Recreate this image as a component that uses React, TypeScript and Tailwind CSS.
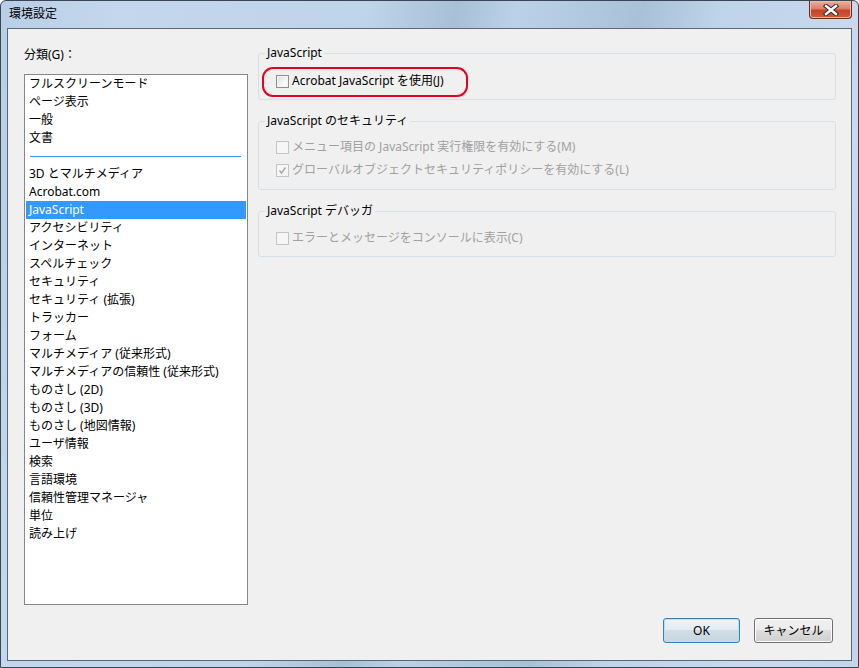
import React from "react"

/*
====================================
DATA
====================================
*/

const topItems = [
 "フルスクリーンモード",
 "ページ表示",
 "一般",
 "文書",
]

const bottomItems = [
 "3D とマルチメディア",
 "Acrobat.com",
 "JavaScript",
 "アクセシビリティ",
 "インターネット",
 "スペルチェック",
 "セキュリティ",
 "セキュリティ (拡張)",
 "トラッカー",
 "フォーム",
 "マルチメディア (従来形式)",
 "マルチメディアの信頼性 (従来形式)",
 "ものさし (2D)",
 "ものさし (3D)",
 "ものさし (地図情報)",
 "ユーザ情報",
 "検索",
 "言語環境",
 "信頼性管理マネージャ",
 "単位",
 "読み上げ",
]

const selected = "JavaScript"

/*
====================================
CHECKBOX
====================================
*/

function CheckBox({
 checked,
 disabled,
}: {
 checked?: boolean
 disabled?: boolean
}) {

 return (

  <span
   className={`
    w-[13px]
    h-[13px]
    shrink-0
    border
    flex
    items-center
    justify-center
    ${
     disabled
      ? "border-[#c4c4c4] bg-[#f6f6f6]"
      : "border-[#8e8f8f] bg-[linear-gradient(135deg,#dcdcdc,#f6f6f6_60%,#ffffff)] shadow-[inset_0_0_0_1px_#f4f4f4]"
    }
   `}
  >

   {
    checked && (

     <svg
      width="9"
      height="9"
      viewBox="0 0 9 9"
     >

      <path
       d="M1.5 4.5 L3.5 7 L7.5 1.5"
       fill="none"
       stroke={disabled ? "#a8a8a8" : "#333"}
       strokeWidth="1.4"
      />

     </svg>

    )
   }

  </span>

 )
}

/*
====================================
OPTION ROW
====================================
*/

function Option({
 label,
 checked,
 disabled,
 className,
}: {
 label: string
 checked?: boolean
 disabled?: boolean
 className?: string
}) {

 return (

  <div
   className={`
    flex
    items-center
    gap-[3px]
    h-[18px]
    pl-[17px]
    whitespace-nowrap
    ${disabled ? "text-[#a0a0a0]" : "text-black"}
    ${className || ""}
   `}
  >

   <CheckBox
    checked={checked}
    disabled={disabled}
   />

   <span>{label}</span>

  </div>

 )
}

/*
====================================
GROUP BOX
====================================
*/

function Group({
 title,
 className,
 children,
}: {
 title: string
 className?: string
 children: React.ReactNode
}) {

 return (

  <fieldset
   className={`
    relative
    border
    border-[#d5dfe5]
    rounded-[3px]
    ${className || ""}
   `}
  >

   <legend
    className="
     ml-[6px]
     px-[2px]
     leading-[16px]
     text-black
    "
   >

    {title}

   </legend>

   {children}

  </fieldset>

 )
}

/*
====================================
BUTTON
====================================
*/

function DialogButton({
 label,
 focused,
 width,
}: {
 label: string
 focused?: boolean
 width: string
}) {

 return (

  <button
   className={`
    ${width}
    h-[25px]
    rounded-[3px]
    border
    text-black
    leading-none
    ${
     focused
      ? "border-[#3c7fb1] shadow-[inset_0_0_0_1px_#aee3f9] bg-[linear-gradient(#edf3f7_0%,#e3ebf1_50%,#d2dee6_50%,#c6d5df_100%)]"
      : "border-[#707070] shadow-[inset_0_0_0_1px_#fcfcfc] bg-[linear-gradient(#f2f2f2_0%,#ebebeb_50%,#dddddd_50%,#cfcfcf_100%)]"
    }
   `}
  >

   {label}

  </button>

 )
}

export default function App() {

 return (

  <div
   className="
    w-[859px]
    h-[668px]
    flex
    flex-col
    border
    border-[#3b4653]
    rounded-t-[6px]
    overflow-hidden
    text-[12px]
    bg-[linear-gradient(100deg,#b8cee7_0%,#c4d7ec_12%,#bfd3ea_38%,#a9bfd8_47%,#bcd1e9_53%,#aac0d9_66%,#bfd3ea_74%,#c9daee_90%,#c2d5eb_100%)]
   "
   style={{
    fontFamily:
     '"Noto Sans", "Noto Sans CJK JP", sans-serif',
   }}
  >

   {/* TITLE BAR */}

   <div
    className="
     h-[27px]
     flex
     items-start
     justify-between
     shrink-0
    "
   >

    <span
     className="
      ml-[8px]
      mt-[5px]
      leading-[16px]
      text-black
     "
    >

     環境設定

    </span>

    <div
     className="
      mr-[6px]
      w-[43px]
      h-[18px]
      rounded-b-[4px]
      border
      border-t-0
      border-[#6d2a1f]
      flex
      items-center
      justify-center
      bg-[linear-gradient(#eab0a2_0%,#dc7f69_45%,#c5442a_55%,#cf5a3c_100%)]
      shadow-[inset_0_0_0_1px_#f0b9aa]
     "
    >

     <svg
      width="16"
      height="12"
      viewBox="0 0 16 12"
     >

      <path
       d="M3 2 L13 10 M13 2 L3 10"
       stroke="#3a2a2a"
       strokeWidth="4.4"
       strokeLinecap="square"
      />

      <path
       d="M3 2 L13 10 M13 2 L3 10"
       stroke="#ffffff"
       strokeWidth="2.4"
       strokeLinecap="square"
      />

     </svg>

    </div>

   </div>


   {/* CLIENT AREA */}

   <div
    className="
     mx-[6px]
     h-[633px]
     shrink-0
     border
     border-[#5c6775]
     bg-[#f0f0f0]
     flex
     flex-col
    "
   >

    <div
     className="
      flex
      pt-[16px]
      pl-[16px]
      pr-[15px]
      gap-[10px]
     "
    >

     {/* CATEGORY LIST */}

     <div className="w-[224px] shrink-0">

      <p
       className="
        mt-[2px]
        leading-[16px]
        text-black
       "
      >

       分類(G)：

      </p>


      <div
       className="
        mt-[11px]
        h-[531px]
        border
        border-[#828790]
        bg-white
        px-[1px]
       "
      >

       {
        topItems.map((item) => (

         <div
          key={item}
          className="
           h-[18px]
           leading-[18px]
           pl-[3px]
           text-black
           whitespace-nowrap
          "
         >

          {item}

         </div>

        ))
       }

       <div
        className="
         h-[18px]
         flex
         items-center
         pl-[4px]
         pr-[5px]
        "
       >

        <div className="h-px w-full bg-[#3399ff]" />

       </div>

       {
        bottomItems.map((item) => (

         <div
          key={item}
          className={`
           h-[18px]
           leading-[18px]
           pl-[3px]
           whitespace-nowrap
           ${
            item === selected
             ? "bg-[#3399ff] text-white"
             : "text-black"
           }
          `}
         >

          {item}

         </div>

        ))
       }

      </div>

     </div>


     {/* SETTINGS */}

     <div className="flex-1 flex flex-col">

      <Group
       title="JavaScript"
       className="pb-[9px]"
      >

       <Option
        label="Acrobat JavaScript を使用(J)"
        className="mt-[11px]"
       />

       {/* highlight mark */}

       <div
        className="
         absolute
         left-[3px]
         top-[6px]
         w-[206px]
         h-[30px]
         border-2
         border-[#e8001c]
         rounded-[11px]
         pointer-events-none
        "
       />

      </Group>


      <Group
       title="JavaScript のセキュリティ"
       className="mt-[13px] pb-[10px]"
      >

       <Option
        label="メニュー項目の JavaScript 実行権限を有効にする(M)"
        disabled
        className="mt-[9px]"
       />

       <Option
        label="グローバルオブジェクトセキュリティポリシーを有効にする(L)"
        checked
        disabled
        className="mt-[5px]"
       />

      </Group>


      <Group
       title="JavaScript デバッガ"
       className="mt-[13px] pb-[9px]"
      >

       <Option
        label="エラーとメッセージをコンソールに表示(C)"
        disabled
        className="mt-[10px]"
       />

      </Group>

     </div>

    </div>


    {/* ACTIONS */}

    <div
     className="
      flex
      justify-end
      gap-[14px]
      mt-[13px]
      pr-[18px]
     "
    >

     <DialogButton
      label="OK"
      focused
      width="w-[77px]"
     />

     <DialogButton
      label="キャンセル"
      width="w-[79px]"
     />

    </div>

   </div>

  </div>

 )
}
